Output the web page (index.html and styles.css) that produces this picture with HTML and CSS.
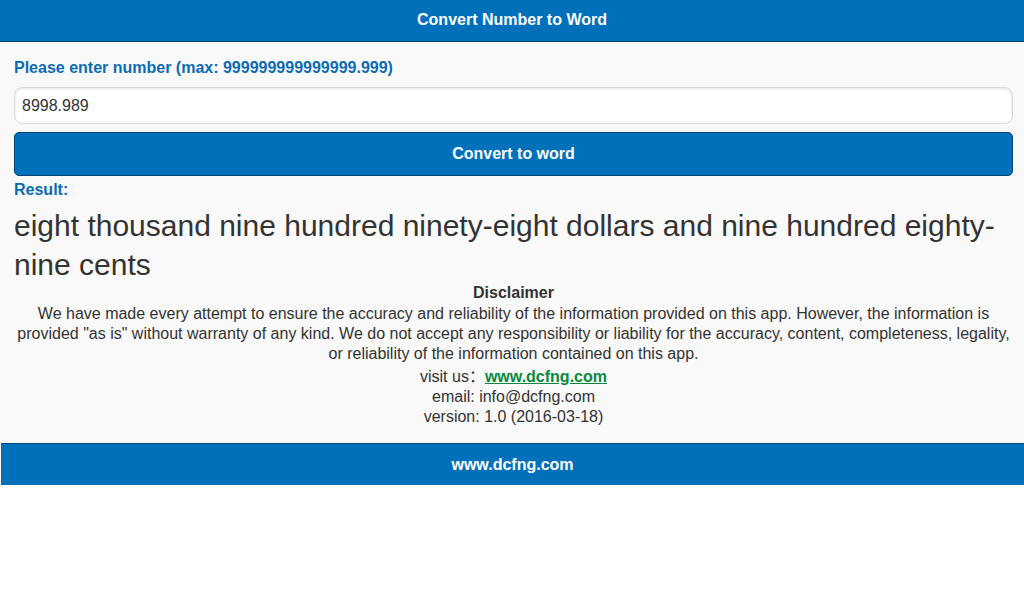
FILE: index.html
```
<!DOCTYPE html>
<html>
	<head>
		<meta charset="utf-8">
		<title>Convert Number to Word</title>
		<link rel="stylesheet" href="styles.css">
	</head>
	<body>
		<div class="page">
			<div class="header">Convert Number to Word</div>
			<div class="content">
				<label class="lbl" for="num">Please enter number (max: 999999999999999.999)</label>
				<input type="text" id="num" class="num" value="8998.989">
				<button class="btn">Convert to word</button>
				<div class="lbl res-lbl">Result:</div>
				<div class="result">eight thousand nine hundred ninety-eight dollars and nine hundred eighty-nine cents</div>
				<div class="disclaimer">
					<div class="dtitle">Disclaimer</div>
					<p>We have made every attempt to ensure the accuracy and reliability of the information provided on this app. However, the information is provided "as is" without warranty of any kind. We do not accept any responsibility or liability for the accuracy, content, completeness, legality, or reliability of the information contained on this app.</p>
					<div class="visit">visit us：<a href="#">www.dcfng.com</a></div>
					<div>email: info@dcfng.com</div>
					<div>version: 1.0 (2016-03-18)</div>
				</div>
			</div>
			<div class="footer">www.dcfng.com</div>
		</div>
	</body>
</html>
```
FILE: styles.css
```
body {
	margin: 0;
	background-color: #fff;
	font-family: "Liberation Sans", Arial, "Noto Sans CJK SC", sans-serif;
	font-size: 16px;
	color: #333;
}

.page {
	background-color: #f9f9f9;
}

.header {
	background-color: #0070bb;
	border-bottom: 1px solid #00497f;
	color: #fff;
	font-weight: bold;
	text-align: center;
	line-height: 19px;
	padding: 10px 0 12px;
}

.content {
	padding: 16px 11px 16px 14px;
}

.lbl {
	display: block;
	color: #0a6cb3;
	font-weight: bold;
	line-height: 20px;
}

.num {
	display: block;
	box-sizing: border-box;
	width: 100%;
	height: 37px;
	margin-top: 9px;
	padding: 0 7px;
	border: 1px solid #dcdcdc;
	border-radius: 8px;
	box-shadow: inset 0 1px 3px rgba(0, 0, 0, 0.12);
	background-color: #fff;
	font-family: inherit;
	font-size: 16px;
	color: #333;
	outline: none;
}

.btn {
	display: block;
	box-sizing: border-box;
	width: 100%;
	height: 44px;
	margin-top: 8px;
	border: 1px solid #00457a;
	border-radius: 5px;
	background-color: #0070bb;
	color: #fff;
	font-family: inherit;
	font-size: 16px;
	font-weight: bold;
}

.res-lbl {
	margin-top: 4px;
}

.result {
	font-size: 30px;
	line-height: 39px;
	margin-top: 6px;
}

.disclaimer {
	text-align: center;
	line-height: 20px;
	margin-top: -1px;
}

.dtitle {
	font-weight: bold;
}

.disclaimer p {
	margin: 1px 0 3px;
}

.visit a {
	color: #078a3d;
	font-weight: bold;
}

.footer {
	background-color: #0070bb;
	border-top: 1px solid #00497f;
	margin-left: 1px;
	color: #fff;
	font-weight: bold;
	text-align: center;
	line-height: 19px;
	padding: 11px 0;
}
```
